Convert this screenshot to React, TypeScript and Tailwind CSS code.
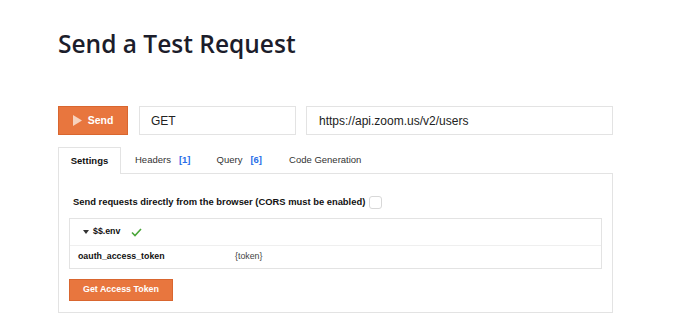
import React from 'react';

const sans = { fontFamily: '"Liberation Sans", Arial, sans-serif' };

const App: React.FC = () => {
  return (
    <div className="min-h-screen w-[690px] bg-white pl-[58px] pr-[77px]" style={sans}>
      {/* Title */}
      <h1 className="pt-[27px] text-[24.5px] font-semibold leading-[34px] text-[#1c1d2b]" style={{ fontFamily: '"Open Sans", sans-serif' }}>
        Send a Test Request
      </h1>

      {/* Request bar */}
      <div className="mt-[45px] flex h-[29px] items-stretch">
        <button className="flex w-[70px] items-center justify-center gap-[6px] border border-[#d9662f] bg-[#e8763e] text-[10.5px] font-bold text-white">
          <svg width="9" height="11" viewBox="0 0 9 11">
            <path d="M0 0 L9 5.5 L0 11 Z" fill="#f7d2bd" />
          </svg>
          Send
        </button>
        <div className="ml-[11px] flex w-[157px] items-center border border-[#e3e3e3] px-[11px] text-[12px] text-[#222]">GET</div>
        <div className="ml-[10px] flex flex-1 items-center border border-[#e3e3e3] px-[12px] text-[12px] text-[#222]">
          https://api.zoom.us/v2/users
        </div>
      </div>

      {/* Tabs */}
      <div className="mt-[12px] flex h-[26px] items-stretch text-[9.5px] text-[#333]">
        <div className="relative z-10 -mb-px flex w-[63px] items-center justify-center border border-b-0 border-[#e3e3e3] bg-white font-bold text-[#111]">
          Settings
        </div>
        <div className="flex items-center pl-[14px]">
          Headers <span className="ml-[8px] font-bold text-[#2a6ee8]">[1]</span>
        </div>
        <div className="flex items-center pl-[26px]">
          Query <span className="ml-[8px] font-bold text-[#2a6ee8]">[6]</span>
        </div>
        <div className="flex items-center pl-[27px]">Code Generation</div>
      </div>

      {/* Panel */}
      <div className="border border-[#e3e3e3] px-[10px] pb-[11px] pt-[21px]">
        <div className="flex h-[14px] items-center pl-[4px] text-[9.4px] font-bold text-[#111]">
          Send requests directly from the browser (CORS must be enabled)
          <span className="ml-[4px] inline-block h-[13px] w-[13px] rounded-[3px] border border-[#d8d8d8] bg-white" />
        </div>

        <div className="mt-[9px] border border-[#e3e3e3] text-[8.8px] text-[#111]">
          <div className="flex h-[27px] items-center border-b border-[#efefef] pl-[13px]">
            <svg width="6" height="4" viewBox="0 0 6 4" className="mr-[4px]">
              <path d="M0 0 L6 0 L3 4 Z" fill="#333" />
            </svg>
            <span className="font-bold">$$.env</span>
            <svg width="11" height="9" viewBox="0 0 11 9" className="ml-[11px]">
              <path d="M1 4.5 L4 7.5 L10 1" fill="none" stroke="#4aa63a" strokeWidth="1.6" />
            </svg>
          </div>
          <div className="flex h-[22px] items-center pl-[8px]">
            <span className="w-[157px] font-bold">oauth_access_token</span>
            <span className="text-[#444]">{'{token}'}</span>
          </div>
        </div>

        <button className="mt-[10px] flex h-[22px] w-[104px] items-center justify-center border border-[#d9662f] bg-[#e8763e] text-[8.9px] font-bold text-white">
          Get Access Token
        </button>
      </div>
    </div>
  );
};

export default App;
